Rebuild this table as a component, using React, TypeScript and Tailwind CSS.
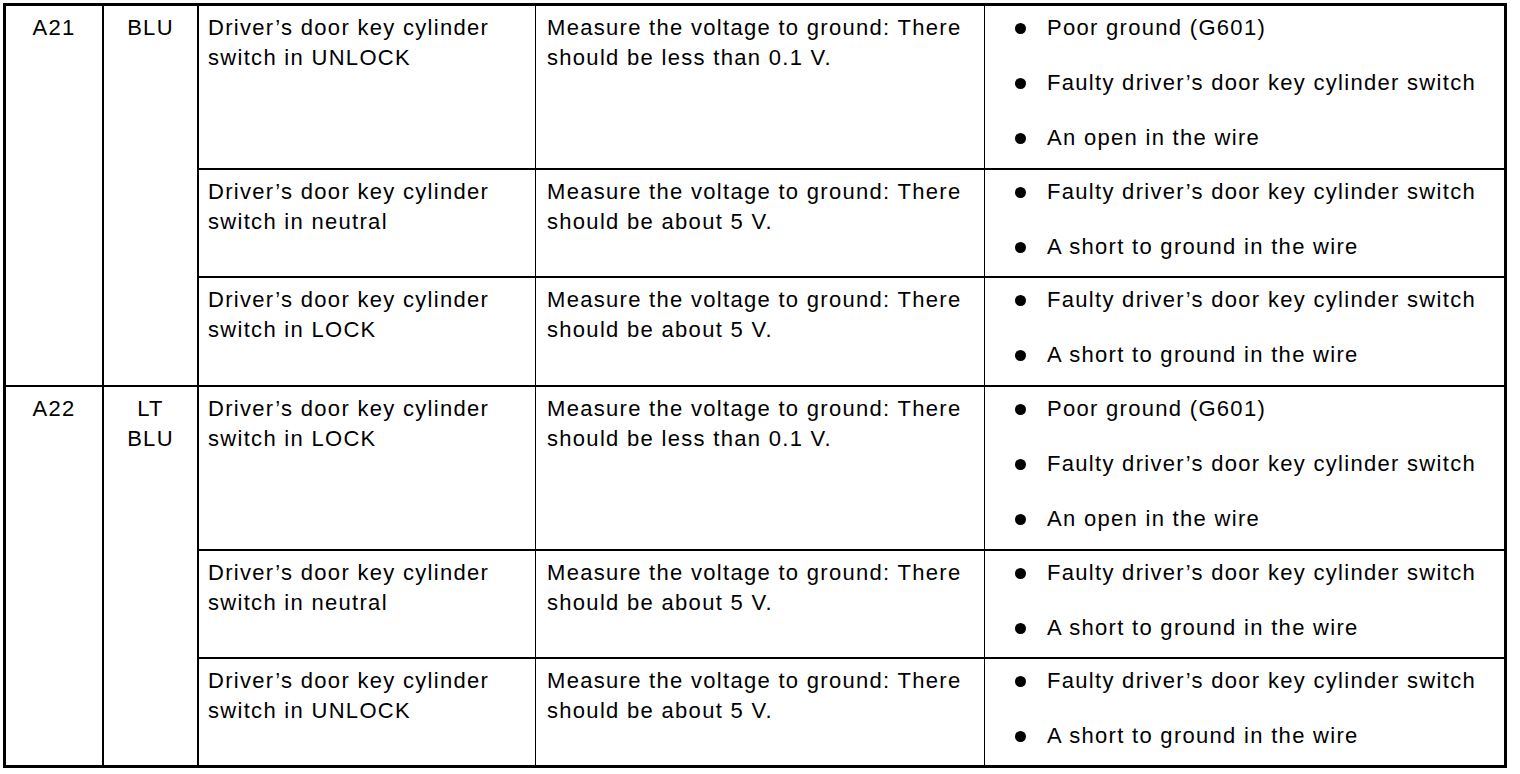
import React from "react";

type Row = { cond: string; meas: string; h: string; bullets: string[] };
type Group = { pin: string; color: string[]; rows: Row[] };

const groups: Group[] = [
  {
    pin: "A21",
    color: ["BLU"],
    rows: [
      {
        cond: "switch in UNLOCK",
        meas: "should be less than 0.1 V.",
        h: "h-[164px]",
        bullets: ["Poor ground (G601)", "Faulty driver’s door key cylinder switch", "An open in the wire"],
      },
      {
        cond: "switch in neutral",
        meas: "should be about 5 V.",
        h: "h-[108px]",
        bullets: ["Faulty driver’s door key cylinder switch", "A short to ground in the wire"],
      },
      {
        cond: "switch in LOCK",
        meas: "should be about 5 V.",
        h: "h-[107px]",
        bullets: ["Faulty driver’s door key cylinder switch", "A short to ground in the wire"],
      },
    ],
  },
  {
    pin: "A22",
    color: ["LT", "BLU"],
    rows: [
      {
        cond: "switch in LOCK",
        meas: "should be less than 0.1 V.",
        h: "h-[164px]",
        bullets: ["Poor ground (G601)", "Faulty driver’s door key cylinder switch", "An open in the wire"],
      },
      {
        cond: "switch in neutral",
        meas: "should be about 5 V.",
        h: "h-[108px]",
        bullets: ["Faulty driver’s door key cylinder switch", "A short to ground in the wire"],
      },
      {
        cond: "switch in UNLOCK",
        meas: "should be about 5 V.",
        h: "h-[106px]",
        bullets: ["Faulty driver’s door key cylinder switch", "A short to ground in the wire"],
      },
    ],
  },
];

export default function App() {
  return (
    <div
      className="min-h-screen bg-white text-black text-[22px] leading-[30px] tracking-[1.3px]"
      style={{ fontFamily: '"Liberation Sans", Arial, sans-serif' }}
    >
      <div className="pt-[3px] pl-[3px]">
        <div className="w-[1504px] border-[3px] border-black flex flex-col">
          {groups.map((g, gi) => (
            <div
              key={g.pin}
              className={`flex ${gi === 0 ? "border-b-2 border-black" : ""}`}
            >
              <div className="w-[98px] shrink-0 border-r-2 border-black pt-[7px] text-center">
                {g.pin}
              </div>
              <div className="w-[95px] shrink-0 border-r-2 border-black pt-[7px] text-center flex flex-col">
                {g.color.map((c) => (
                  <span key={c}>{c}</span>
                ))}
              </div>
              <div className="flex-1 flex flex-col">
                {g.rows.map((r, ri) => (
                  <div
                    key={ri}
                    className={`flex ${r.h} ${ri < g.rows.length - 1 ? "border-b-2 border-black" : ""}`}
                  >
                    <div className="w-[337px] shrink-0 border-r border-black pt-[7px] pl-[9px] flex flex-col whitespace-nowrap">
                      <span>Driver’s door key cylinder</span>
                      <span>{r.cond}</span>
                    </div>
                    <div className="w-[449px] shrink-0 border-r border-black pt-[7px] pl-[11px] flex flex-col whitespace-nowrap">
                      <span>Measure the voltage to ground: There</span>
                      <span>{r.meas}</span>
                    </div>
                    <div className="flex-1 pt-[7px] pl-[30px] flex flex-col gap-[25px] whitespace-nowrap">
                      {r.bullets.map((b) => (
                        <div key={b} className="flex items-center gap-[21px]">
                          <span className="w-[11px] h-[11px] rounded-full bg-black shrink-0" />
                          <span>{b}</span>
                        </div>
                      ))}
                    </div>
                  </div>
                ))}
              </div>
            </div>
          ))}
        </div>
      </div>
    </div>
  );
}
